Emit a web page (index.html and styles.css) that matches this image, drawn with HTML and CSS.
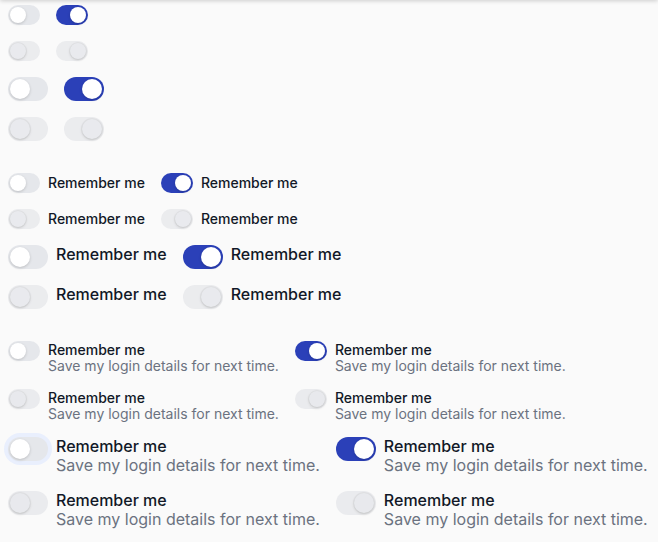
FILE: index.html
```html
<!DOCTYPE html>
<html lang="en">
<head>
    <meta charset="UTF-8">
    <meta name="viewport" content="width=device-width, initial-scale=1.0">
    <title>Switch</title>
    <link rel="stylesheet" href="styles.css">
</head>
<body>
    <div class="topbar"></div>

    <div class="page">
        <!-- plain switches -->
        <section class="group">
            <div class="row">
                <span class="switch"></span>
                <span class="switch on"></span>
            </div>
            <div class="row">
                <span class="switch disabled"></span>
                <span class="switch on disabled"></span>
            </div>
            <div class="row">
                <span class="switch lg"></span>
                <span class="switch lg on"></span>
            </div>
            <div class="row">
                <span class="switch lg disabled"></span>
                <span class="switch lg on disabled"></span>
            </div>
        </section>

        <!-- switches with label -->
        <section class="group">
            <div class="row">
                <label class="field"><span class="switch"></span><span class="label">Remember me</span></label>
                <label class="field"><span class="switch on"></span><span class="label">Remember me</span></label>
            </div>
            <div class="row">
                <label class="field"><span class="switch disabled"></span><span class="label">Remember me</span></label>
                <label class="field"><span class="switch on disabled"></span><span class="label">Remember me</span></label>
            </div>
            <div class="row">
                <label class="field lg"><span class="switch lg"></span><span class="label">Remember me</span></label>
                <label class="field lg"><span class="switch lg on"></span><span class="label">Remember me</span></label>
            </div>
            <div class="row">
                <label class="field lg"><span class="switch lg disabled"></span><span class="label">Remember me</span></label>
                <label class="field lg"><span class="switch lg on disabled"></span><span class="label">Remember me</span></label>
            </div>
        </section>

        <!-- switches with label and description -->
        <section class="group">
            <div class="row">
                <label class="field top"><span class="switch"></span><span class="text"><span class="label">Remember me</span><span class="desc">Save my login details for next time.</span></span></label>
                <label class="field top"><span class="switch on"></span><span class="text"><span class="label">Remember me</span><span class="desc">Save my login details for next time.</span></span></label>
            </div>
            <div class="row">
                <label class="field top"><span class="switch disabled"></span><span class="text"><span class="label">Remember me</span><span class="desc">Save my login details for next time.</span></span></label>
                <label class="field top"><span class="switch on disabled"></span><span class="text"><span class="label">Remember me</span><span class="desc">Save my login details for next time.</span></span></label>
            </div>
            <div class="row">
                <label class="field top lg"><span class="switch lg focus"></span><span class="text"><span class="label">Remember me</span><span class="desc">Save my login details for next time.</span></span></label>
                <label class="field top lg"><span class="switch lg on"></span><span class="text"><span class="label">Remember me</span><span class="desc">Save my login details for next time.</span></span></label>
            </div>
            <div class="row">
                <label class="field top lg"><span class="switch lg disabled"></span><span class="text"><span class="label">Remember me</span><span class="desc">Save my login details for next time.</span></span></label>
                <label class="field top lg"><span class="switch lg on disabled"></span><span class="text"><span class="label">Remember me</span><span class="desc">Save my login details for next time.</span></span></label>
            </div>
        </section>
    </div>
</body>
</html>
```

FILE: styles.css
```css
body {
    margin: 0;
    font-family: 'Inter', 'Noto Sans', sans-serif;
    background-color: #fafafa;
    color: #111827;
}
.topbar {
    position: fixed;
    top: -10px;
    left: 0;
    right: 0;
    height: 10px;
    box-shadow: 0 1px 4px rgba(0,0,0,0.18);
}
.page {
    padding: 5px 8px;
    display: flex;
    flex-direction: column;
    gap: 32px;
}
.group {
    display: flex;
    flex-direction: column;
    gap: 16px;
}
.row {
    display: flex;
    align-items: flex-start;
    gap: 16px;
}

/* switch */
.switch {
    position: relative;
    flex: none;
    display: block;
    width: 32px;
    height: 20px;
    border-radius: 999px;
    background-color: #e5e7eb;
}
.switch::after {
    content: "";
    position: absolute;
    top: 2px;
    left: 2px;
    width: 16px;
    height: 16px;
    border-radius: 50%;
    background-color: #fff;
    box-shadow: 0 1px 3px rgba(0,0,0,0.18);
}
.switch.on {
    background-color: #2b40b8;
}
.switch.on::after {
    left: 14px;
}
.switch.lg {
    width: 40px;
    height: 24px;
}
.switch.lg::after {
    width: 20px;
    height: 20px;
}
.switch.lg.on::after {
    left: 18px;
}
.switch.disabled {
    background-color: #e8e9ec;
    opacity: 0.85;
}
.switch.disabled::after {
    background-color: #e5e7eb;
    box-shadow: 0 0 0 1px rgba(0,0,0,0.04), 0 1px 3px rgba(0,0,0,0.18);
}
.switch.focus {
    box-shadow: 0 0 0 4px #e9effd;
}

/* label + description */
.field {
    display: flex;
    align-items: center;
    gap: 8px;
}
.field.top,
.field.lg {
    align-items: flex-start;
}
.label {
    font-size: 14px;
    font-weight: 500;
    line-height: 16px;
    color: #111827;
}
.field.lg .label {
    font-size: 16px;
    line-height: 19px;
}
.text {
    display: flex;
    flex-direction: column;
}
.field.top .label {
    padding-top: 1px;
}
.field.top.lg .label {
    padding-top: 0;
}
.desc {
    font-size: 14px;
    line-height: 15px;
    color: #6b7280;
}
.field.lg .desc {
    font-size: 16px;
    line-height: 19px;
}
```
